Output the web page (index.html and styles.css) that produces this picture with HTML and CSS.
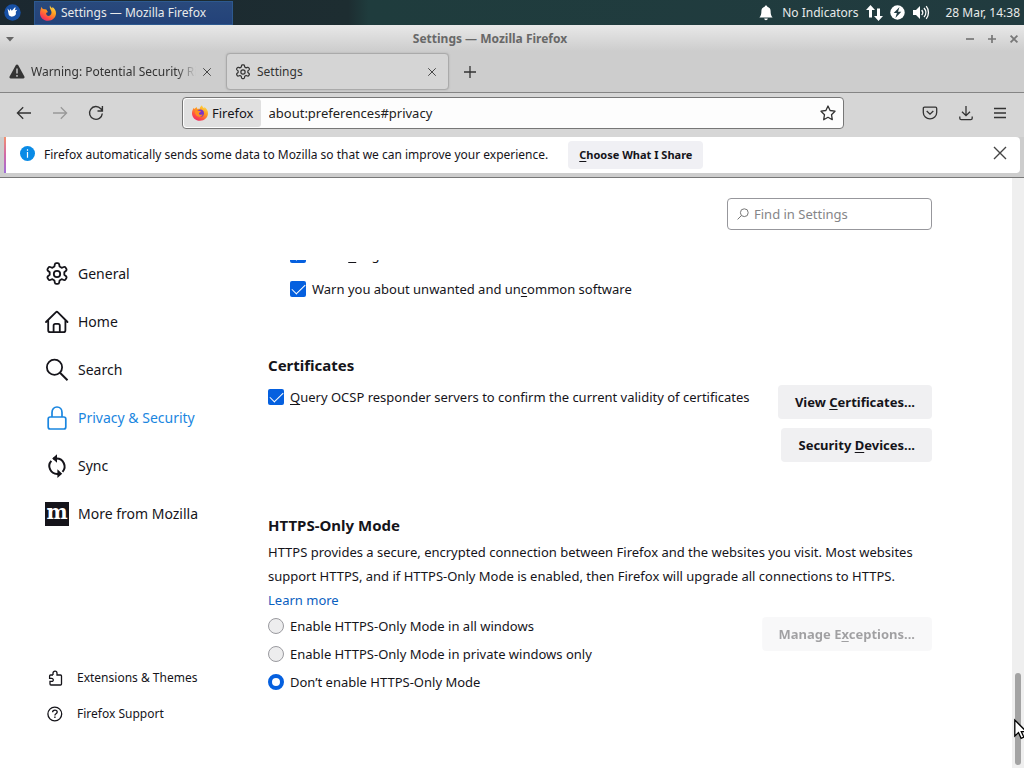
FILE: index.html
```html
<!DOCTYPE html>
<html lang="en">
<head>
<meta charset="utf-8">
<title>Settings — Mozilla Firefox</title>
<link rel="stylesheet" href="styles.css">
</head>
<body>
<svg class="defs" aria-hidden="true">
  <defs>
    <linearGradient id="flame" x1="0.8" y1="0" x2="0.2" y2="1">
      <stop offset="0" stop-color="#ffe14a"/><stop offset="0.4" stop-color="#ff9a1f"/><stop offset="0.75" stop-color="#ff4a45"/><stop offset="1" stop-color="#e8256f"/>
    </linearGradient>
    <symbol id="firefox" viewBox="0 0 16 16">
      <path fill="url(#flame)" d="M10 .3c.2 1.500 1.200 2.300 2.300 3.200-.1-.6 0-1 .2-1.400C14.600 3.600 16 5.600 16 8.300c0 4.300-3.500 7.500-8 7.500s-8-3.300-8-7.600C0 6 .8 3.900 2 2.700c0 .6.100 1 .4 1.400C3 3.300 3.700 2.600 4.800 2c-.1.800.2 1.500.6 1.900.9-.1 1.500 0 2.200.2C7.800 2.500 8.600 1.200 10 .3z"/>
      <circle cx="8.200" cy="8.200" r="3.700" fill="#7a35c8"/>
      <path fill="#ff8e20" d="M3 5.800c1.600-.9 2.800-.5 3.900 0 .7.300 1.400.3 2.100.5-.2.900-1.300 1-1.800 1.500-.4.500-.3 1.300.3 1.700 1 .8 2.200-.3 3.200.1-.7 2-3.100 3-5.100 1.900C3.700 10.500 2.600 8 3 5.800z"/>
    </symbol>
    <symbol id="foxdark" viewBox="0 0 16 16">
      <path fill="url(#flame)" d="M10 .3c.2 1.500 1.200 2.300 2.300 3.200-.1-.6 0-1 .2-1.400C14.600 3.600 16 5.600 16 8.300c0 4.300-3.500 7.500-8 7.500s-8-3.300-8-7.600C0 6 .8 3.900 1.500 1.700c.3 1 .7 1.600 1.400 2.200l3.600.6L8 7 6 8l1 2.500c2 1.200 4.400-.3 4.500-3C11.500 5 9 3.500 10 .3z"/>
      <path fill="#213f73" d="M6.400 4.700c1.100-.9 2.400-.8 3.200 0 1.400 1.300 1.500 3.600.2 4.900-1 .9-2.400.8-3.100 0-.7-.8 0-1.500 1.200-1.800.6-.2.500-1.300-1.500-3.100z"/>
    </symbol>
    <symbol id="gear" viewBox="0 0 24 24">
      <g fill="none" stroke="currentColor" stroke-width="1.800" stroke-linejoin="round">
        <circle cx="12" cy="12" r="3.200"/>
        <path d="M11.200 1.200h1.600q1.200 0 1.400 1.200l.4 2.200 2 1.200 2.200-.8q1.200-.4 1.800.6l.8 1.400q.6 1-.3 1.800l-1.800 1.500v2.400l1.800 1.500q.9.800.3 1.800l-.8 1.400q-.6 1-1.800.6l-2.200-.8-2 1.200-.4 2.200q-.2 1.200-1.400 1.200h-1.600q-1.200 0-1.400-1.200l-.4-2.200-2-1.200-2.200.8q-1.200.4-1.800-.6l-.8-1.400q-.6-1 .3-1.800l1.800-1.500v-2.400L2.900 8.800q-.9-.8-.3-1.800l.8-1.400q.6-1 1.800-.6l2.200.8 2-1.200.4-2.200q.2-1.200 1.400-1.200z"/>
      </g>
    </symbol>
    <symbol id="close" viewBox="0 0 16 16"><path d="M2 2l12 12M14 2L2 14" fill="none" stroke="currentColor" stroke-width="1.400"/></symbol>
  </defs>
</svg>

<header class="panel">
  <button class="launcher" aria-label="Applications">
    <svg width="17" height="17" viewBox="0 0 17 17"><circle cx="8.500" cy="8.500" r="8.200" fill="#1750a5"/><path fill="#fff" d="M3.500 4.500l2.200 2.600.6-2.300 1.500 2 3.200-3.600c.6 0 .6.600.4 1.200l-.6 1.900 2.500-.6-1.600 2.400c.8 2.300-.5 4.300-3.200 4.500-2.400.2-4-.8-4-3z"/></svg>
  </button>
  <button class="task"><svg width="16" height="16"><use href="#foxdark"/></svg>Settings — Mozilla Firefox</button>
  <div class="tray">
    <svg width="14" height="16" viewBox="0 0 14 16"><path fill="#fff" d="M7 .5c.9 0 1.300.6 1.300 1.300C10.500 2.400 11.600 4 11.600 6c0 3 .5 4.700 2 6.500H.4C1.900 10.700 2.400 9 2.400 6c0-2 1.100-3.600 3.300-4.200C5.700 1.100 6.100.5 7 .5zM5.200 13.500h3.600c-.2 1.200-.9 1.700-1.800 1.700s-1.600-.5-1.800-1.700z"/></svg>
    <span class="indicators">No Indicators</span>
    <svg width="17" height="16" viewBox="0 0 17 16"><path fill="#fff" d="M4.500 0L9 5H6v7.500H3V5H0zM12.500 16L8 11h3V3.500h3V11h3z"/></svg>
    <svg class="power" width="15" height="15" viewBox="0 0 15 15"><circle cx="7.500" cy="7.500" r="7.200" fill="#fff"/><path fill="#223c43" d="M9.500 2L3.700 8h3.200l-1.500 5 5.900-6.300H8z"/></svg>
    <svg width="16" height="15" viewBox="0 0 16 15"><path fill="#fff" d="M0 5h3l4-4v13l-4-4H0z"/><path d="M8.700 5c1.300 1.500 1.300 3.500 0 5M11 3c2.300 2.700 2.300 6.300 0 9M13.200 1.200c3 3.500 3 9.100 0 12.600" fill="none" stroke="#fff" stroke-width="1.300"/></svg>
    <time class="clock">28 Mar, 14:38</time>
  </div>
</header>

<div class="chrome">
  <div class="titlebar">
    <button class="wm" aria-label="Window menu"><svg width="8" height="5" viewBox="0 0 8 5"><path fill="#666" d="M0 0h8L4 4.500z"/></svg></button>
    <span class="title">Settings — Mozilla Firefox</span>
    <div class="wm-group">
      <button class="wm" aria-label="Minimize"><svg width="8" height="8" viewBox="0 0 8 8"><path d="M0 4h8" stroke="#777" stroke-width="1.700"/></svg></button>
      <button class="wm" aria-label="Maximize"><svg width="8" height="8" viewBox="0 0 8 8"><path d="M0 4h8M4 0v8" stroke="#777" stroke-width="1.700"/></svg></button>
      <button class="wm" aria-label="Close window"><svg width="8" height="8" viewBox="0 0 8 8"><path d="M.6.600l6.800 6.800M7.400.600L.6 7.400" stroke="#777" stroke-width="1.800"/></svg></button>
    </div>
  </div>

  <div class="tabs">
    <div class="tab">
      <svg width="16" height="15" viewBox="0 0 16 15"><path fill="#333" d="M6.900 1.100c.5-.9 1.700-.9 2.200 0l6.300 11.500c.5.900-.1 1.900-1.100 1.900H1.700c-1 0-1.600-1-1.100-1.900z"/><path d="M8 4.500v5M8 11v1.700" stroke="#ccc" stroke-width="1.400"/></svg>
      <span class="tab-label fade">Warning: Potential Security Risk Ahead</span>
      <button class="tab-close" aria-label="Close tab"><svg width="10" height="10"><use href="#close"/></svg></button>
    </div>
    <div class="tab active">
      <svg width="16" height="16"><use href="#gear"/></svg>
      <span class="tab-label">Settings</span>
      <button class="tab-close" aria-label="Close tab"><svg width="10" height="10"><use href="#close"/></svg></button>
    </div>
    <button class="new-tab" aria-label="New tab"><svg width="12" height="12" viewBox="0 0 12 12"><path d="M6 0v12M0 6h12" stroke="#333" stroke-width="1.300"/></svg></button>
  </div>

  <div class="toolbar">
    <div class="history">
      <button aria-label="Back"><svg width="16" height="14" viewBox="0 0 16 14"><path d="M15 7H1.500M7.200 1.200L1.400 7l5.800 5.800" fill="none" stroke="#333" stroke-width="1.300"/></svg></button>
      <button aria-label="Forward" disabled><svg width="16" height="14" viewBox="0 0 16 14"><path d="M1 7h13.500M8.800 1.200L14.600 7l-5.800 5.800" fill="none" stroke="#999" stroke-width="1.300"/></svg></button>
      <button aria-label="Reload"><svg width="16" height="16" viewBox="0 0 16 16"><path d="M14.300 8.500A6.400 6.400 0 1 1 12.800 3.800L14.300 5.500M14.400 1v5H9.500" fill="none" stroke="#333" stroke-width="1.400"/></svg></button>
    </div>
    <div class="urlbar">
      <span class="identity"><svg width="16" height="16"><use href="#firefox"/></svg>Firefox</span>
      <input class="url" type="text" value="about:preferences#privacy" aria-label="Address">
      <button aria-label="Bookmark"><svg width="16" height="16" viewBox="0 0 16 16"><path d="M8 1l2.100 4.500 4.900.7-3.500 3.500.8 5L8 12.300l-4.300 2.400.8-5L1 6.200l4.900-.7z" fill="none" stroke="#333" stroke-width="1.300" stroke-linejoin="round"/></svg></button>
    </div>
    <div class="actions">
      <button aria-label="Save to Pocket"><svg width="16" height="14" viewBox="0 0 16 14"><path d="M2.500 1.200h11c.7 0 1.200.5 1.200 1.200v4c0 3.700-3 6.400-6.700 6.400S1.300 10.100 1.300 6.400v-4c0-.7.500-1.200 1.200-1.200zM4.700 5L8 8.200 11.300 5" fill="none" stroke="#333" stroke-width="1.300"/></svg></button>
      <button aria-label="Downloads"><svg width="14" height="16" viewBox="0 0 14 16"><path d="M7 1v9.500M3 6.700l4 4 4-4M.8 11.500v1.800c0 .8.600 1.400 1.400 1.400h9.600c.8 0 1.400-.6 1.400-1.400v-1.800" fill="none" stroke="#333" stroke-width="1.300"/></svg></button>
      <button aria-label="Menu"><svg width="12" height="12" viewBox="0 0 12 12"><path d="M0 1.500h12M0 6h12M0 10.500h12" stroke="#333" stroke-width="1.300"/></svg></button>
    </div>
  </div>

  <div class="notice">
    <svg width="15" height="15" viewBox="0 0 15 15"><circle cx="7.500" cy="7.500" r="7.500" fill="#0a8be6"/><path d="M7.500 3.200v1.600M7.500 6v5.700" stroke="#fff" stroke-width="1.200"/></svg>
    <span>Firefox automatically sends some data to Mozilla so that we can improve your experience.</span>
    <button class="choose"><u>C</u>hoose What I Share</button>
    <button class="dismiss" aria-label="Dismiss"><svg width="16" height="16"><use href="#close"/></svg></button>
  </div>
</div>

<div class="page">
  <aside class="sidebar">
    <nav class="categories">
      <a href="#general"><svg width="24" height="24"><use href="#gear"/></svg>General</a>
      <a href="#home"><svg width="24" height="24" viewBox="0 0 24 24"><path d="M1 12L10.800 2.300a1.500 1.500 0 0 1 2.100 0L22.500 12M3.200 10v10.200c0 1.200.8 2 2 2h13.200c1.200 0 2-.8 2-2V10M8.600 22v-6.400c0-1 .7-1.700 1.700-1.700h2.800c1 0 1.700.7 1.700 1.700V22" fill="none" stroke="currentColor" stroke-width="1.800" stroke-linecap="round"/></svg>Home</a>
      <a href="#search"><svg width="24" height="24" viewBox="0 0 24 24"><circle cx="9.500" cy="9.300" r="7.600" fill="none" stroke="currentColor" stroke-width="1.800"/><path d="M15 14.800l7.500 7.500" stroke="currentColor" stroke-width="2"/></svg>Search</a>
      <a href="#privacy" class="current" aria-current="page"><svg width="24" height="24" viewBox="0 0 24 24"><rect x="3.200" y="11" width="17.600" height="12" rx="2" fill="none" stroke="currentColor" stroke-width="1.700"/><path d="M7 11V6.500C7 3.300 9 1 12 1s5 2.300 5 5.500V11" fill="none" stroke="currentColor" stroke-width="1.700"/></svg>Privacy &amp; Security</a>
      <a href="#sync"><svg width="24" height="24" viewBox="0 0 24 24"><path d="M8.200 4.600h3.300a7.900 7.900 0 0 1 6 13.200M15.800 19.900h-3.300A7.900 7.900 0 0 1 6.300 6.800" fill="none" stroke="currentColor" stroke-width="2"/><path fill="currentColor" d="M12 .2v8.600L7.200 4.600zM12.400 15.300v8.600l4.800-4.200z"/></svg>Sync</a>
      <a href="#more"><span class="moz" aria-hidden="true">m</span>More from Mozilla</a>
    </nav>
    <nav class="support">
      <a href="#addons"><svg width="16" height="16" viewBox="0 0 16 16"><path d="M6 5V3.200a2 2 0 0 1 4 0V5h3.500c.6 0 1 .4 1 1v8c0 .6-.4 1-1 1H4c-.6 0-1-.4-1-1v-2.600h1.800a1.500 1.500 0 0 0 0-3H2.600V6c0-.6.400-1 1-1H6" fill="none" stroke="currentColor" stroke-width="1.300"/></svg>Extensions &amp; Themes</a>
      <a href="#help"><svg width="16" height="16" viewBox="0 0 16 16"><circle cx="7.800" cy="8" r="6.900" fill="none" stroke="currentColor" stroke-width="1.300"/><path d="M5.600 6.300c0-1.400 1-2.200 2.300-2.200s2.300.8 2.300 2c0 1.700-2.300 1.700-2.300 3.400M7.900 10.500V12" fill="none" stroke="currentColor" stroke-width="1.300"/></svg>Firefox Support</a>
    </nav>
  </aside>

  <main class="main">
    <div class="search-row">
      <label class="search">
        <svg width="12" height="12" viewBox="0 0 12 12"><circle cx="7.300" cy="4.700" r="3.900" fill="none" stroke="#777"/><path d="M4.500 7.500L.6 11.400" stroke="#777"/></svg>
        <input type="search" placeholder="Find in Settings" aria-label="Find in Settings">
      </label>
    </div>
    <div class="pane">
      <div class="subgroup">
        <label class="option"><input type="checkbox" checked><span>Block <u>d</u>angerous downloads</span></label>
        <label class="option"><input type="checkbox" checked><span>Warn you about unwanted and un<u>c</u>ommon software</span></label>
      </div>

      <section class="certificates">
        <h2>Certificates</h2>
        <div class="split">
          <label class="option"><input type="checkbox" checked><span><u>Q</u>uery OCSP responder servers to confirm the current validity of certificates</span></label>
          <div class="buttons">
            <button class="btn">View <u>C</u>ertificates...</button>
            <button class="btn">Security <u>D</u>evices...</button>
          </div>
        </div>
      </section>

      <section class="https">
        <h2>HTTPS-Only Mode</h2>
        <p>HTTPS provides a secure, encrypted connection between Firefox and the websites you visit. Most websites support HTTPS, and if HTTPS-Only Mode is enabled, then Firefox will upgrade all connections to HTTPS.</p>
        <a class="learn" href="#learn">Learn more</a>
        <div class="split">
          <div class="radios">
            <label class="option"><input type="radio" name="https"><span>Enable HTTPS-Only Mode in all windows</span></label>
            <label class="option"><input type="radio" name="https"><span>Enable HTTPS-Only Mode in private windows only</span></label>
            <label class="option"><input type="radio" name="https" checked><span>Don’t enable HTTPS-Only Mode</span></label>
          </div>
          <div class="buttons"><button class="btn" disabled>Manage E<u>x</u>ceptions...</button></div>
        </div>
      </section>
    </div>
  </main>

  <div class="scrollbar" aria-hidden="true"><div class="thumb"></div>
    <svg class="pointer" width="12" height="20" viewBox="0 0 12 20"><path d="M.8 1v16l3.700-3.400 2.600 5.700 2.700-1.200-2.500-5.500h5z" fill="#fff" stroke="#000" stroke-width="1.300"/></svg>
  </div>
</div>
</body>
</html>
```
FILE: styles.css
```css
* { box-sizing: border-box; }

body {
  margin: 0;
  height: 100vh;
  display: flex;
  flex-direction: column;
  overflow: hidden;
  background: #fff;
  color: #15141a;
  font: 12px/16px "Noto Sans", sans-serif;
}

button {
  margin: 0;
  padding: 0;
  border: 0;
  background: none;
  color: inherit;
  font: inherit;
}

svg { display: block; flex: none; overflow: visible; }
.defs { position: absolute; width: 0; height: 0; }
a { color: inherit; text-decoration: none; }
u { text-underline-offset: 2px; text-decoration-thickness: 1px; }

/* Desktop panel */
.panel {
  display: flex;
  align-items: center;
  height: 25px;
  flex: none;
  padding: 0 4px;
  background: linear-gradient(90deg, #1b2830, #1d2d31 34%, #1f3c3d 36%, #213b3f);
  color: #e8eaea;
}
.task {
  display: flex;
  align-items: center;
  gap: 5px;
  width: 199px;
  height: 24px;
  margin-left: 13px;
  padding: 0 5px;
  border: 1px solid #2d598f;
  background: linear-gradient(#29497c, #234279);
}
.tray { display: flex; align-items: center; margin-left: auto; }
.indicators { margin: 0 8px 0 9px; }
.power { margin: 0 8px 0 7px; }
.clock { margin-left: 16px; }

/* Browser window frame */
.chrome {
  flex: none;
  border-bottom: 1px solid #777;
  background: linear-gradient(#e8e8e8, #cdcdcd 26px);
}
.titlebar {
  display: flex;
  align-items: center;
  justify-content: space-between;
  height: 28px;
  padding: 0 6px;
  color: #686868;
}
.title { font-weight: bold; }
.wm-group { display: flex; gap: 14px; }
.tabs {
  display: flex;
  align-items: center;
  height: 40px;
  border-bottom: 1px solid #858585;
  padding-bottom: 2px;
  color: #333;
}
.tab {
  display: flex;
  align-items: center;
  gap: 6px;
  width: 223px;
  height: 37px;
  padding: 0 10px 0 9px;
}
.tab:first-child { width: 226px; }
.tab.active {
  padding: 0 11px 0 8px;
  border: 1px solid #aaa;
  border-radius: 4px;
  background: #d5d5d5;
  box-shadow: 0 0 2px #aaa;
}
.tab-label { flex: 1; overflow: hidden; white-space: nowrap; }
.fade { mask-image: linear-gradient(90deg, #000 88%, transparent); }
.tab:first-child .tab-close { margin-right: 4px; }
.new-tab { margin-left: 15px; }

.toolbar {
  display: flex;
  align-items: center;
  height: 44px;
  padding: 0 18px 4px 16px;
  background: #d6d6d6;
}
.history { display: flex; gap: 20px; align-items: center; width: 166px; }
.urlbar {
  display: flex;
  align-items: center;
  flex: 1;
  height: 32px;
  padding-right: 7px;
  border: 1px solid #777;
  border-radius: 4px;
  background: #fdfdfd;
  font-size: 13px;
}
.identity {
  display: flex;
  align-items: center;
  gap: 4px;
  height: 28px;
  margin-left: 1px;
  padding: 0 7px 0 8px;
  border-radius: 3px;
  background: #e0e0e0;
}
.url {
  flex: 1;
  min-width: 0;
  padding: 0 8px;
  border: 0;
  background: none;
  color: #222;
  font: inherit;
}
.actions { display: flex; align-items: center; gap: 21px; margin: 0 0 0 78px; }

.notice {
  display: flex;
  align-items: center;
  height: 36px;
  margin: 0 4px 4px;
  padding-right: 12px;
  border-radius: 0 4px 4px 0;
  background: linear-gradient(#f2906e, #d069a8, #a06dd8) 0 0 / 2px 100% no-repeat #fff;
}
.notice span { margin-left: 9px; }
.notice > svg { margin: 0 0 4px 16px; }
.choose {
  height: 28px;
  margin-left: 20px;
  padding: 0 11px;
  border-radius: 4px;
  background: #f0f0f4;
  font-size: 11px;
  font-weight: bold;
}
.dismiss { margin-left: auto; padding-bottom: 4px; color: #444; }

/* Settings page */
.page { display: flex; flex: 1; min-height: 0; }
.sidebar {
  display: flex;
  flex-direction: column;
  justify-content: space-between;
  width: 268px;
  flex: none;
  padding: 72px 0 36px 45px;
}
.sidebar a { display: flex; align-items: center; }
.categories a { gap: 9px; height: 48px; font-size: 14px; }
.categories .current { color: #1a86e0; }
.moz {
  display: flex;
  justify-content: center;
  width: 24px;
  height: 24px;
  background: #15141a;
  color: #fff;
  font: bold 20px/20px "DejaVu Serif", serif;
}
.support a { gap: 14px; height: 36px; padding-left: 2px; }

.main {
  display: flex;
  flex-direction: column;
  flex: 1;
  min-width: 0;
  max-width: 664px;
  font-size: 13px;
  line-height: 24px;
}
.search-row { display: flex; justify-content: flex-end; padding: 20px 0 30px; }
.search {
  display: flex;
  align-items: center;
  gap: 5px;
  width: 205px;
  height: 32px;
  padding: 0 9px;
  border: 1px solid #97979c;
  border-radius: 4px;
}
.search input {
  flex: 1;
  min-width: 0;
  padding: 0;
  border: 0;
  outline: 0;
  background: none;
  font: inherit;
}
.search input::placeholder { color: #858588; }
.pane {
  display: flex;
  flex-direction: column;
  justify-content: flex-end;
  flex: 1;
  min-height: 0;
  overflow: hidden;
  padding-bottom: 74px;
}
.option { display: flex; align-items: center; gap: 6px; }
.option input {
  appearance: none;
  display: grid;
  place-items: center;
  flex: none;
  width: 16px;
  height: 16px;
  margin: 0;
}
.option input[type="checkbox"] { border-radius: 2px; background: #0560df; }
.option input[type="checkbox"]::before {
  content: "";
  width: 12px;
  height: 6px;
  border: solid #fff;
  border-width: 0 0 1px 1px;
  rotate: -45deg;
  translate: 0 -2px;
}
.option input[type="radio"] { border: 1px solid #9a9a9f; border-radius: 50%; background: #ededee; }
.option input[type="radio"]:checked { border: 4px solid #0560df; background: #fff; }

.subgroup { display: flex; flex-direction: column; gap: 10px; padding-left: 22px; }
h2 { margin: 0; font-size: 15px; line-height: 24px; }
.certificates { margin-top: 52px; }
.split { display: flex; justify-content: space-between; align-items: flex-start; }
.certificates .option { margin-top: 8px; }
.buttons { display: flex; flex-direction: column; align-items: flex-end; gap: 9px; }
.certificates .buttons { margin-top: 8px; }
.https .buttons { margin-top: 5px; }
.btn {
  height: 34px;
  padding: 0 17px;
  border-radius: 4px;
  background: #f0f0f2;
  font-size: 13px;
  font-weight: bold;
  white-space: nowrap;
}
.btn:disabled { opacity: 0.4; }
.https { margin-top: 51px; }
.https p { margin: 3px 0 0; }
.learn { color: #0a60c0; }
.radios { display: flex; flex-direction: column; gap: 4px; margin-top: 2px; }

.scrollbar {
  position: relative;
  display: flex;
  flex-direction: column;
  justify-content: flex-end;
  width: 12px;
  margin-left: auto;
  padding: 3px;
  background: #efefef;
}
.thumb { height: 92px; border-radius: 3px; background: #a3a3a3; }
.pointer { position: absolute; right: -2px; bottom: 29px; }
```
